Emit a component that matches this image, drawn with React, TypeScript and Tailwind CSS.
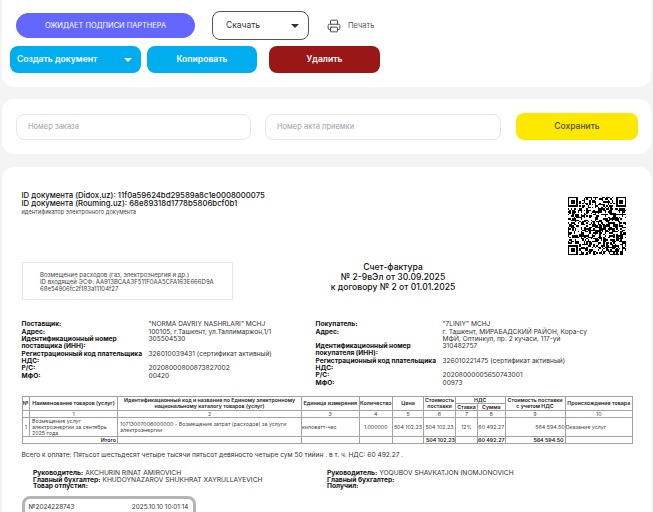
import { Printer } from 'lucide-react';

const qrSize = 41;

function isFinder(x: number, y: number) {
  return (x < 8 && y < 8) || (x >= qrSize - 8 && y < 8) || (x < 8 && y >= qrSize - 8);
}

function qrCells() {
  const cells: [number, number][] = [];
  let seed = 2024228743;
  for (let y = 0; y < qrSize; y++) {
    for (let x = 0; x < qrSize; x++) {
      seed = (seed * 1103515245 + 12345) & 0x7fffffff;
      if (!isFinder(x, y) && (seed >> 16) % 100 < 50) cells.push([x, y]);
    }
  }
  return cells;
}

function Finder({ x, y }: { x: number; y: number }) {
  return (
    <>
      <rect x={x} y={y} width="7" height="7" fill="#000" />
      <rect x={x + 1} y={y + 1} width="5" height="5" fill="#fff" />
      <rect x={x + 2} y={y + 2} width="3" height="3" fill="#000" />
    </>
  );
}

function QrCode() {
  return (
    <svg viewBox={`0 0 ${qrSize} ${qrSize}`} className="h-[58px] w-[58px]" shapeRendering="crispEdges">
      {qrCells().map(([x, y]) => (
        <rect key={`${x}-${y}`} x={x} y={y} width="1" height="1" fill="#000" />
      ))}
      <Finder x={0} y={0} />
      <Finder x={qrSize - 7} y={0} />
      <Finder x={0} y={qrSize - 7} />
    </svg>
  );
}

function Caret() {
  return <span className="h-0 w-0 border-x-[4px] border-t-[4px] border-x-transparent border-t-current" />;
}

type PartyRow = { label: string; value: string | string[] };

const seller: PartyRow[] = [
  { label: 'Поставщик:', value: '"NORMA DAVRIY NASHRLARI" MCHJ' },
  { label: 'Адрес:', value: '100105, г.Ташкент, ул.Таллимаржон,1/1' },
  { label: 'Идентификационный номер поставщика (ИНН):', value: '305504530' },
  { label: 'Регистрационный код плательщика НДС:', value: '326010039431 (сертификат активный)' },
  { label: 'Р/С:', value: '20208000800873827002' },
  { label: 'МФО:', value: '00420' },
];

const buyer: PartyRow[] = [
  { label: 'Покупатель:', value: '"7LINIY" MCHJ' },
  { label: 'Адрес:', value: ['г. Ташкент, МИРАБАДСКИЙ РАЙОН, Кора-су', 'МФЙ, Олтинкул, пр. 2 кучаси, 117-уй'] },
  { label: 'Идентификационный номер покупателя (ИНН):', value: '310482757' },
  { label: 'Регистрационный код плательщика НДС:', value: '326010221475 (сертификат активный)' },
  { label: 'Р/С:', value: '20208000005650743001' },
  { label: 'МФО:', value: '00973' },
];

function Party({ rows }: { rows: PartyRow[] }) {
  return (
    <div className="grid w-[280px] grid-cols-[126px_1fr] content-start gap-x-[1px] gap-y-[0.5px] text-[6.6px] leading-[7px]">
      {rows.map((row) => (
        <div key={row.label} className="contents">
          <div className="font-bold text-[#111]">{row.label}</div>
          <div className="text-[#333]">
            {Array.isArray(row.value) ? row.value.map((line) => <div key={line}>{line}</div>) : row.value}
          </div>
        </div>
      ))}
    </div>
  );
}

const cell = 'border border-[#a3a3a3] px-0 text-center align-middle';
const widths = [7.5, 88, 184, 57.5, 33.5, 31, 32, 22, 27.5, 60, 67.5];

function InvoiceTable() {
  return (
    <table className="w-[610.5px] table-fixed border-collapse text-[5.3px] leading-[6px] text-[#222]">
      <colgroup>
        {widths.map((w, i) => (
          <col key={i} style={{ width: w }} />
        ))}
      </colgroup>
      <tbody>
        <tr className="h-[7px] font-semibold">
          <td rowSpan={2} className={cell}>№</td>
          <td rowSpan={2} className={`${cell} whitespace-nowrap`}>Наименование товаров (услуг)</td>
          <td rowSpan={2} className={cell}>
            Идентификационный код и название по Единому электронному национальному каталогу товаров (услуг)
          </td>
          <td rowSpan={2} className={`${cell} whitespace-nowrap`}>Единица измерения</td>
          <td rowSpan={2} className={cell}>Количество</td>
          <td rowSpan={2} className={cell}>Цена</td>
          <td rowSpan={2} className={cell}>Стоимость поставки</td>
          <td colSpan={2} className={cell}>НДС</td>
          <td rowSpan={2} className={cell}>Стоимость поставки с учетом НДС</td>
          <td rowSpan={2} className={`${cell} whitespace-nowrap`}>Происхождение товара</td>
        </tr>
        <tr className="h-[7.5px] font-semibold">
          <td className={cell}>Ставка</td>
          <td className={cell}>Сумма</td>
        </tr>
        <tr className="h-[6.5px] text-[#444]">
          <td className={cell}></td>
          <td className={cell}>1</td>
          <td className={cell}>2</td>
          <td className={cell}>3</td>
          <td className={cell}>4</td>
          <td className={cell}>5</td>
          <td className={cell}>6</td>
          <td className={cell}>7</td>
          <td className={cell}>8</td>
          <td className={cell}>9</td>
          <td className={cell}>10</td>
        </tr>
        <tr className="h-[18px] whitespace-nowrap text-[#444]">
          <td className={cell}>1</td>
          <td className={`${cell} pl-[2px] text-left`}>
            Возмещение услуг
            <br />
            электроэнергии за сентябрь
            <br />
            2025 года
          </td>
          <td className={`${cell} pl-[2px] text-left`}>
            10713007006000000 - Возмещение затрат (расходов) за услуги
            <br />
            электроэнергии
          </td>
          <td className={`${cell} text-left`}>киловатт-час</td>
          <td className={cell}>1.000000</td>
          <td className={cell}>504 102.23</td>
          <td className={cell}>504 102.23</td>
          <td className={cell}>12%</td>
          <td className={cell}>60 492.27</td>
          <td className={`${cell} text-right`}>564 594.50</td>
          <td className={`${cell} text-left`}>Оказание услуг</td>
        </tr>
        <tr className="h-[7px] whitespace-nowrap font-semibold">
          <td colSpan={2} className={`${cell} pr-[1px] text-right`}>Итого</td>
          <td className={cell}></td>
          <td className={cell}></td>
          <td className={cell}></td>
          <td className={cell}></td>
          <td className={`${cell} text-right`}>504 102.23</td>
          <td className={cell}></td>
          <td className={`${cell} text-right`}>60 492.27</td>
          <td className={`${cell} pr-[1px] text-right`}>564 594.50</td>
          <td className={cell}></td>
        </tr>
      </tbody>
    </table>
  );
}

function Signature({ rows }: { rows: [string, string][] }) {
  return (
    <div className="w-[294px] text-[6.7px] leading-[6.7px] text-[#333]">
      {rows.map(([label, name]) => (
        <div key={label}>
          <span className="font-bold text-[#111]">{label}</span> {name}
        </div>
      ))}
    </div>
  );
}

export default function App() {
  return (
    <div className="h-[512px] overflow-hidden bg-[#f3f4f6] px-[2px] font-['Inter',sans-serif]">
      <div className="h-[87px] rounded-b-xl bg-white pl-[8px] pt-[11px]">
        <div className="flex h-[29px] items-center">
          <div className="ml-[6px] flex h-[25px] w-[179px] items-center justify-center rounded-full bg-[#6366ff] text-[7.4px] text-white">
            ОЖИДАЕТ ПОДПИСИ ПАРТНЕРА
          </div>
          <div className="ml-[17px] flex h-[29px] w-[97px] items-center justify-between rounded-lg border border-[#555] pl-[13px] pr-[9px] text-[8.5px] text-[#333]">
            Скачать
            <Caret />
          </div>
          <Printer className="ml-[18px] h-[14px] w-[14px] text-[#444]" strokeWidth={1.6} />
          <span className="ml-[7px] text-[7.5px] text-[#555]">Печать</span>
        </div>
        <div className="mt-[6px] flex h-[27px] items-center text-[8.6px] font-semibold text-white">
          <div className="flex h-full w-[131px] items-center justify-between rounded-lg bg-[#00aeef] pl-[7px] pr-[9px]">
            Создать документ
            <Caret />
          </div>
          <div className="ml-[6px] flex h-full w-[110px] items-center justify-center rounded-lg bg-[#00aeef]">Копировать</div>
          <div className="ml-[12px] flex h-full w-[111px] items-center justify-center rounded-lg bg-[#991717]">Удалить</div>
        </div>
      </div>

      <div className="mt-[12px] flex h-[55px] items-center rounded-xl bg-white pl-[14px]">
        <div className="flex h-[26px] w-[235px] items-center rounded-lg border border-[#e5e7eb] pl-[11px] text-[7.5px] text-[#9ca3af]">
          Номер заказа
        </div>
        <div className="ml-[14px] flex h-[26px] w-[236px] items-center rounded-lg border border-[#e5e7eb] pl-[11px] text-[7.5px] text-[#9ca3af]">
          Номер акта приемки
        </div>
        <div className="ml-[15px] flex h-[27px] w-[122px] items-center justify-center rounded-lg bg-[#ffe800] text-[8.5px] font-medium text-[#4b4b2a]">
          Сохранить
        </div>
      </div>

      <div className="mt-[13px] h-[400px] rounded-t-xl bg-white pl-[19.5px] pr-[19px] pt-[24px]">
        <div className="flex justify-between">
          <div className="pr-[5px] text-[7.75px] font-medium leading-[8px] text-[#111]">
            <div>ID документа (Didox.uz): 11f0a59624bd29589a8c1e0008000075</div>
            <div>ID документа (Rouming.uz): 68e89318d1778b5806bcf0b1</div>
            <div className="mt-[0.5px] text-[5.7px] font-normal text-[#444]">идентификатор электронного документа</div>
          </div>
          <div className="mr-[6px] mt-[6px]">
            <QrCode />
          </div>
        </div>

        <div className="mt-[7px] flex">
          <div className="h-[38px] w-[211px] border border-[#e5e7eb] pl-[17.5px] pt-[8px] text-[6px] leading-[7px] text-[#444]">
            <div>Возмещение расходов (газ, электроэнергия и др.)</div>
            <div>ID входящей ЭСФ: AA913BCAA3F511F0AA5CFA163E666D9A</div>
            <div>68e54906fc2f183a11104f27</div>
          </div>
          <div className="ml-[85.5px] w-[150px] whitespace-nowrap text-center text-[8.6px] font-medium leading-[10px] text-[#111]">
            <div>Счет-фактура</div>
            <div>№ 2-9вЭл от 30.09.2025</div>
            <div>к договору № 2 от 01.01.2025</div>
          </div>
        </div>

        <div className="mt-[21px] flex gap-[14px]">
          <Party rows={seller} />
          <Party rows={buyer} />
        </div>

        <div className="mt-[9px]">
          <InvoiceTable />
        </div>

        <div className="mt-[7px] text-[6.6px] leading-[8px] text-[#333]">
          Всего к оплате: Пятьсот шестьдесят четыре тысячи пятьсот девяносто четыре сум 50 тийин . в т. ч. НДС: 60 492.27 .
        </div>

        <div className="ml-[11.5px] mt-[11px] flex">
          <Signature
            rows={[
              ['Руководитель:', 'AKCHURIN RINAT AMIROVICH'],
              ['Главный бухгалтер:', 'KHUDOYNAZAROV SHUKHRAT XAYRULLAYEVICH'],
              ['Товар отпустил:', ''],
            ]}
          />
          <Signature
            rows={[
              ['Руководитель:', 'YOQUBOV SHAVKATJON INOMJONOVICH'],
              ['Главный бухгалтер:', ''],
              ['Получил:', ''],
            ]}
          />
        </div>

        <div className="mt-[6px] flex h-[40px] w-[174px] justify-between rounded-lg border-[3px] border-[#b5b5b5] px-[4px] pt-[4px] text-[6.4px] leading-[8px] text-[#333]">
          <span>№2024228743</span>
          <span>2025.10.10 10:01:14</span>
        </div>
      </div>
    </div>
  );
}
